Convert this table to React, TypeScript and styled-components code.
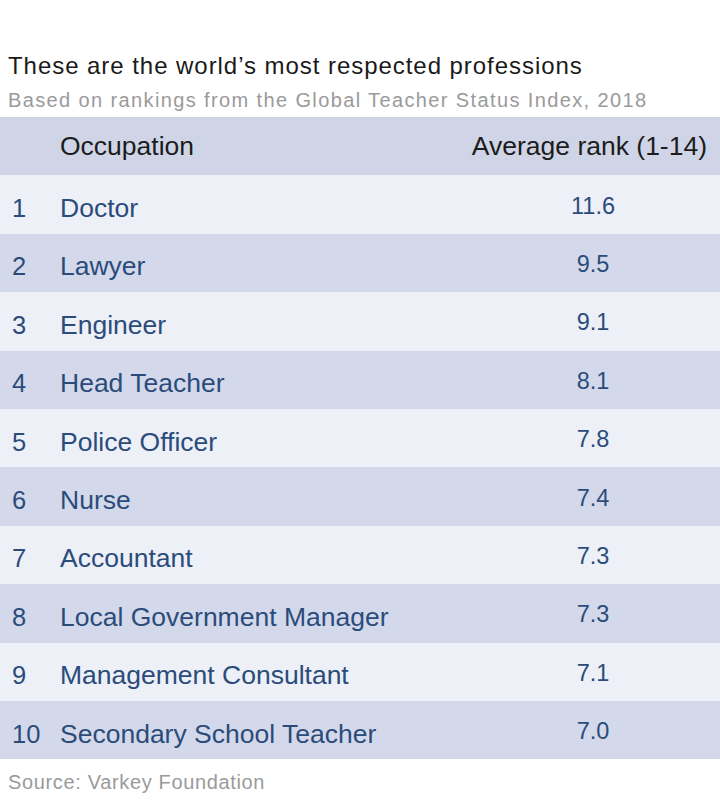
import styled, { createGlobalStyle } from 'styled-components'

const GlobalStyle = createGlobalStyle`
  body {
    margin: 0;
    background: #ffffff;
    font-family: "Liberation Sans", Arial, sans-serif;
  }
`

const Page = styled.div`
  width: 720px;
  height: 802px;
  padding-top: 50px;
  box-sizing: border-box;
  background: #fff;
`

const Title = styled.h1`
  margin: 0 0 0 8px;
  font-size: 24px;
  font-weight: 400;
  line-height: 32px;
  color: #1a1a1a;
  letter-spacing: 0.95px;
`

const Subtitle = styled.p`
  margin: 4px 0 0 8px;
  font-size: 20px;
  line-height: 28px;
  color: #9a9a9a;
  letter-spacing: 1.38px;
`

const Table = styled.div`
  margin-top: 3px;
  display: flex;
  flex-direction: column;
`

const Row = styled.div<{ $shade: 'head' | 'light' | 'dark' }>`
  display: grid;
  grid-template-columns: 48px 1fr 240px;
  align-items: center;
  height: 58.4px;
  background: ${p =>
    p.$shade === 'head' ? '#cfd5e7' : p.$shade === 'dark' ? '#d3d9ea' : '#edf0f7'};
`

const Rank = styled.span`
  padding-left: 12px;
  padding-top: 8px;
  font-size: 25.5px;
  color: #2b4c7a;
`

const Occupation = styled.span<{ $head?: boolean }>`
  padding-left: 12px;
  padding-top: ${p => (p.$head ? '0' : '8px')};
  font-size: 26.5px;
  white-space: nowrap;
  color: ${p => (p.$head ? '#1c1c1c' : '#2b4c7a')};
`

const Value = styled.span<{ $head?: boolean }>`
  white-space: nowrap;
  justify-self: ${p => (p.$head ? 'end' : 'stretch')};
  text-align: center;
  padding-right: ${p => (p.$head ? '13px' : '14px')};
  padding-top: ${p => (p.$head ? '0' : '3px')};
  font-size: ${p => (p.$head ? '26.5px' : '23.5px')};
  color: ${p => (p.$head ? '#1c1c1c' : '#2b4c7a')};
`

const Source = styled.p`
  margin: 12px 0 0 8px;
  font-size: 20px;
  color: #9a9a9a;
  letter-spacing: 0.65px;
`

const rows = [
  ['Doctor', '11.6'],
  ['Lawyer', '9.5'],
  ['Engineer', '9.1'],
  ['Head Teacher', '8.1'],
  ['Police Officer', '7.8'],
  ['Nurse', '7.4'],
  ['Accountant', '7.3'],
  ['Local Government Manager', '7.3'],
  ['Management Consultant', '7.1'],
  ['Secondary School Teacher', '7.0'],
]

const App = () => {
  return (
    <Page>
      <GlobalStyle />
      <Title>These are the world’s most respected professions</Title>
      <Subtitle>Based on rankings from the Global Teacher Status Index, 2018</Subtitle>
      <Table>
        <Row $shade="head">
          <Rank />
          <Occupation $head>Occupation</Occupation>
          <Value $head>Average rank (1-14)</Value>
        </Row>
        {rows.map(([name, score], i) => (
          <Row key={name} $shade={i % 2 === 0 ? 'light' : 'dark'}>
            <Rank>{i + 1}</Rank>
            <Occupation>{name}</Occupation>
            <Value>{score}</Value>
          </Row>
        ))}
      </Table>
      <Source>Source: Varkey Foundation</Source>
    </Page>
  )
}

export default App
